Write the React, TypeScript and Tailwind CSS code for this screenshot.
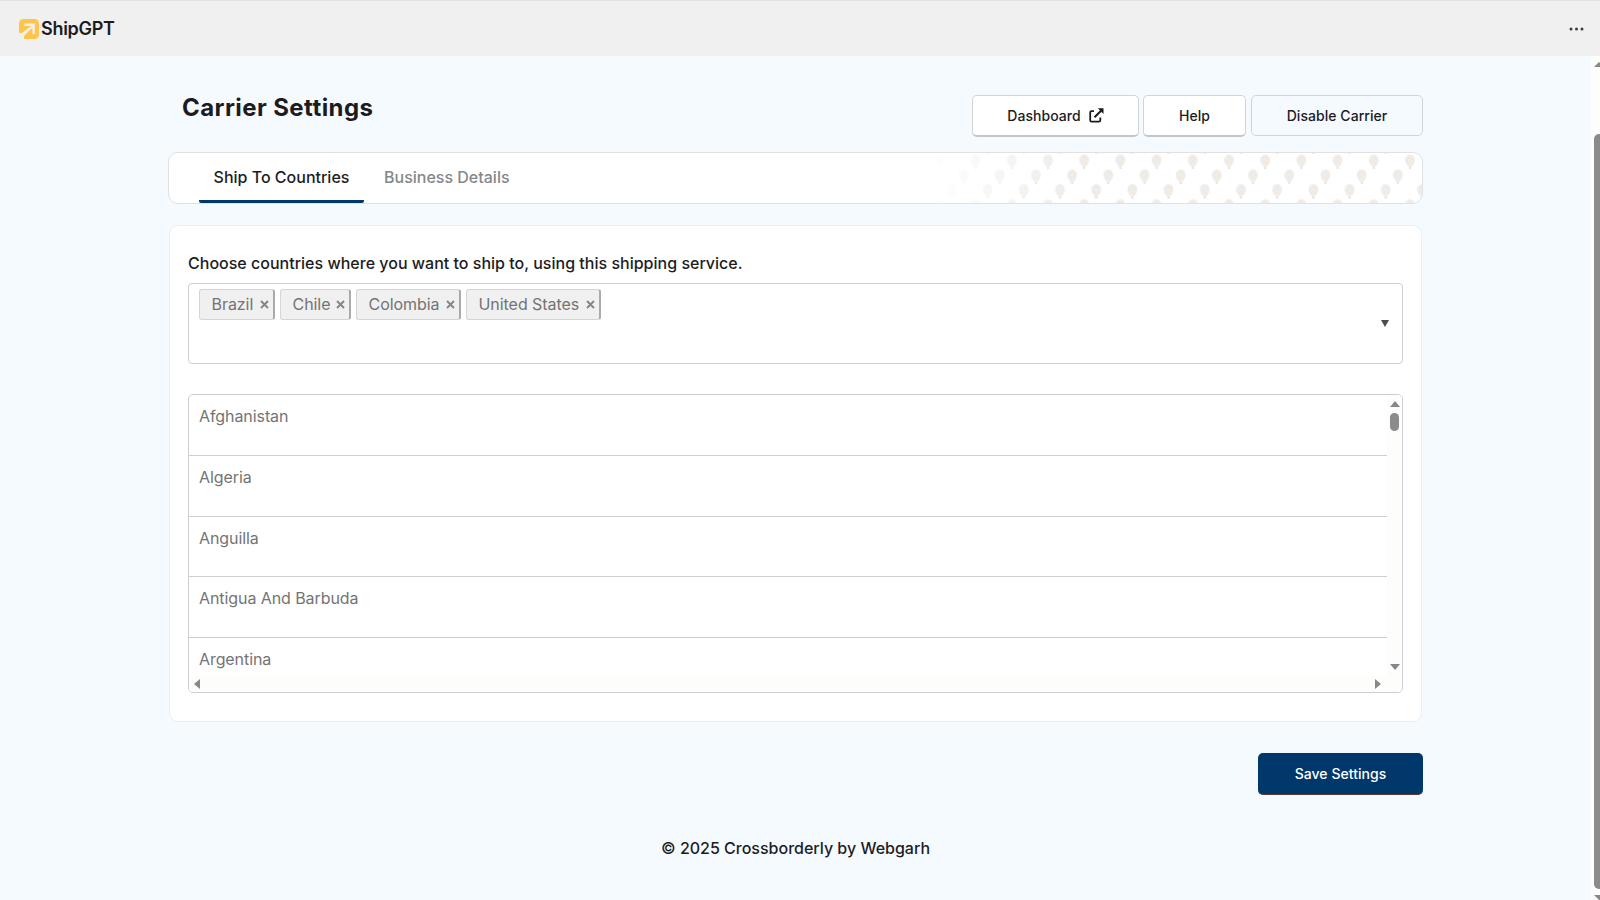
const chips = [
  { name: "Brazil", box: "w-[76px]" },
  { name: "Chile", box: "w-[71px]" },
  { name: "Colombia", box: "w-[105px]" },
  { name: "United States", box: "w-[135px]" },
];

const countries = ["Afghanistan", "Algeria", "Anguilla", "Antigua And Barbuda", "Argentina"];

function Logo() {
  return (
    <svg width="20" height="20" viewBox="0 0 20 20" className="block">
      <rect width="20" height="20" rx="4.500" fill="#ffc44c" />
      <path d="M0 13.800Q2 14.600 3.500 13.400L12.300 6.900H5.300V4.500H15.800V15H13.400V8.700L5.600 16.300Q4.500 17.800 5.200 20H0Z" fill="#f3f0e8" />
    </svg>
  );
}

function ExternalIcon() {
  return (
    <svg width="15" height="15" viewBox="0 0 15 15" fill="none" stroke="#1c1c1f" className="block">
      <path d="M5 3.200H2.600Q1.200 3.200 1.200 4.600V12.200Q1.200 13.600 2.600 13.600H9.900Q11.300 13.600 11.300 12.200V9.400" strokeWidth="1.800" />
      <path d="M5.500 9.300L12.600 2.200" strokeWidth="2" />
      <path d="M8.800 .3H14.500V6Z" fill="#1c1c1f" stroke="none" />
    </svg>
  );
}

function Balloons() {
  return (
    <svg width="500" height="50" className="block">
      <defs>
        <pattern id="balloons" width="36.2" height="44.7" x="482" y="1" patternUnits="userSpaceOnUse">
          <g id="balloon">
            <path d="M6 .5C9 .5 11 3 11 6C11 9.400 8.400 12.300 6.700 13.400L7.200 14.800H4.800L5.300 13.400C3.600 12.300 1 9.400 1 6C1 3 3 .5 6 .5Z" fill="#eeeef0" />
            <path d="M4 3h2v2H4zM7.200 4.500h2v2h-2zM4.200 7.500h2v2h-2zM7 8.500h1.700v2H7z" fill="#fde6c6" />
            <path d="M6.500 2h1.500v1.500H6.500zM2.200 5.600h1.600v1.500H2.200z" fill="#e4e9f0" />
            <path d="M5 13.200h2v1.500H5z" fill="#dcdde1" />
          </g>
          <use href="#balloon" x="24.1" y="14.900" />
          <use href="#balloon" x="12" y="29.600" />
        </pattern>
        <linearGradient id="fade">
          <stop offset="0" stopColor="#fff" />
          <stop offset=".05" stopColor="#fff" stopOpacity=".9" />
          <stop offset=".3" stopColor="#fff" stopOpacity="0" />
        </linearGradient>
      </defs>
      <rect width="500" height="50" fill="url(#balloons)" />
      <rect width="500" height="50" fill="url(#fade)" />
    </svg>
  );
}

export default function App() {
  return (
    <div className="flex h-[900px] w-[1600px] flex-col overflow-hidden bg-[#f5faff] font-['Inter',sans-serif] text-[#1c1c1f]">
      <header className="flex h-14 shrink-0 items-center justify-between border-t border-[#e2e2e2] bg-[#f0f0f0] pr-[15px] pl-[19px]">
        <div className="flex items-center gap-[2px]">
          <Logo />
          <span className="text-[18px] leading-6 font-semibold tracking-[-0.3px]">ShipGPT</span>
        </div>
        <svg width="16" height="4" viewBox="0 0 16 4" fill="#413a3a">
          <circle cx="2" cy="2" r="1.500" />
          <circle cx="7.500" cy="2" r="1.500" />
          <circle cx="13" cy="2" r="1.500" />
        </svg>
      </header>
      <div className="flex min-h-0 flex-1">
        <main className="flex flex-1 flex-col px-[168px]">
          <div className="flex h-[96px] items-start justify-between pl-[14px]">
            <h1 className="mt-[36px] text-[24px] leading-8 font-bold tracking-[0.42px]">Carrier Settings</h1>
            <div className="mt-[39px] flex text-[14px] font-[550] tracking-[0.05px]">
              <button className="mr-1 flex h-[42px] w-[167px] items-center justify-center gap-[8px] rounded-[5px] border border-b-2 border-[#d2d5d8] border-b-[#c4c7ca] bg-white">
                <span>Dashboard</span>
                <ExternalIcon />
              </button>
              <button className="mr-[5px] h-[42px] w-[103px] rounded-[5px] border border-b-2 border-[#d2d5d8] border-b-[#c4c7ca] bg-white">Help</button>
              <button className="h-[41px] w-[172px] rounded-[5px] border border-[#d2d5d8]">Disable Carrier</button>
            </div>
          </div>
          <nav className="flex h-[52px] justify-between overflow-hidden rounded-[10px] border border-[#dfe1e3] bg-white pl-[30px]">
            <div className="flex text-[16px]">
              <div className="flex h-[50px] w-[165px] justify-center rounded-[2px] border-b-[3px] border-[#00386c] pt-3 leading-6 font-medium">
                <span>Ship To Countries</span>
              </div>
              <div className="ml-[20px] pt-3 leading-6 font-medium text-[#85878a]">
                <span>Business Details</span>
              </div>
            </div>
            <Balloons />
          </nav>
          <section className="mx-[1px] mt-[21px] flex h-[497px] flex-col rounded-[9px] border border-[#eceef0] bg-white px-[18px] pt-[25px]">
            <h2 className="h-[32px] text-[16px] leading-6 font-medium tracking-[0.01px]">
              <span>Choose countries where you want to ship to, using this shipping service.</span>
            </h2>
            <div className="flex h-[81px] items-center justify-between rounded-[4px] border border-[#ccced2] pr-[13px] pl-[10px]">
              <div className="flex gap-[5px] self-start pt-[5px] text-[16px] tracking-[-0.05px] text-[#747474]">
                {chips.map((c) => (
                  <div key={c.name} className={`${c.box} flex h-[31px] items-center justify-between rounded-[3px] border border-r-2 border-[#d3d5d7] border-r-[#a9aaac] bg-[#f0f0f0] pr-[4px] pl-[11.5px]`}>
                    <span className="-mt-[2px]">{c.name}</span>
                    <svg width="9" height="9" viewBox="0 0 9 9" className="block">
                      <path d="M1 1L8 8M8 1L1 8" stroke="#858585" strokeWidth="1.900" />
                    </svg>
                  </div>
                ))}
              </div>
              <svg width="8" height="7" viewBox="0 0 8 7">
                <path d="M0 0H8L4 7Z" fill="#4c4c4c" />
              </svg>
            </div>
            <div className="mt-[30px] flex h-[299px] overflow-hidden rounded-[5px] border border-[#ccced2]">
              <div className="flex flex-1 flex-col">
                <ul className="h-[281px] overflow-hidden text-[16px] leading-6 tracking-[-0.08px] text-[#747474]">
                  {countries.map((c) => (
                    <li key={c} className="h-[60.75px] border-b border-[#ccced2] pt-[9px] pl-[10px]">{c}</li>
                  ))}
                </ul>
                <div className="flex h-4 items-center justify-between bg-[#fdfdfb] pr-[6px] pl-[5px]">
                  <svg width="6" height="10"><path d="M6 0V10L0 5Z" fill="#888" /></svg>
                  <svg width="6" height="10"><path d="M0 0V10L6 5Z" fill="#888" /></svg>
                </div>
              </div>
              <div className="flex w-[15px] flex-col items-center bg-[#fdfdfb] pt-[6px] pb-[22px]">
                <svg width="10" height="6"><path d="M0 6H10L5 0Z" fill="#888" /></svg>
                <div className="mt-[6px] h-[18px] w-[9px] rounded-full bg-[#8b8b8b]" />
                <svg width="10" height="6" className="mt-auto"><path d="M0 0H10L5 6Z" fill="#888" /></svg>
              </div>
            </div>
          </section>
          <div className="mt-[31px] flex justify-end">
            <button className="h-[42px] w-[165px] rounded-[5px] border-b border-[#5c3c30] bg-[#00386c] text-[14px] font-[550] tracking-[0.05px] text-white">Save Settings</button>
          </div>
          <footer className="mt-[41px] text-center text-[16px] leading-6 font-medium">
            <span>© 2025 Crossborderly by Webgarh</span>
          </footer>
        </main>
        <div className="flex w-[9px] flex-col overflow-hidden bg-[#fdfdfc] pt-[6px] pl-[3px]">
          <svg width="6" height="5"><path d="M0 5H6V1L5 0Z" fill="#888" /></svg>
          <div className="mt-[67px] h-[755px] rounded-l-[5px] bg-[#8b8b8b]" />
          <svg width="6" height="5" className="mt-[6px]"><path d="M0 0H6V5L5 5Z" fill="#888" /></svg>
        </div>
      </div>
    </div>
  );
}
